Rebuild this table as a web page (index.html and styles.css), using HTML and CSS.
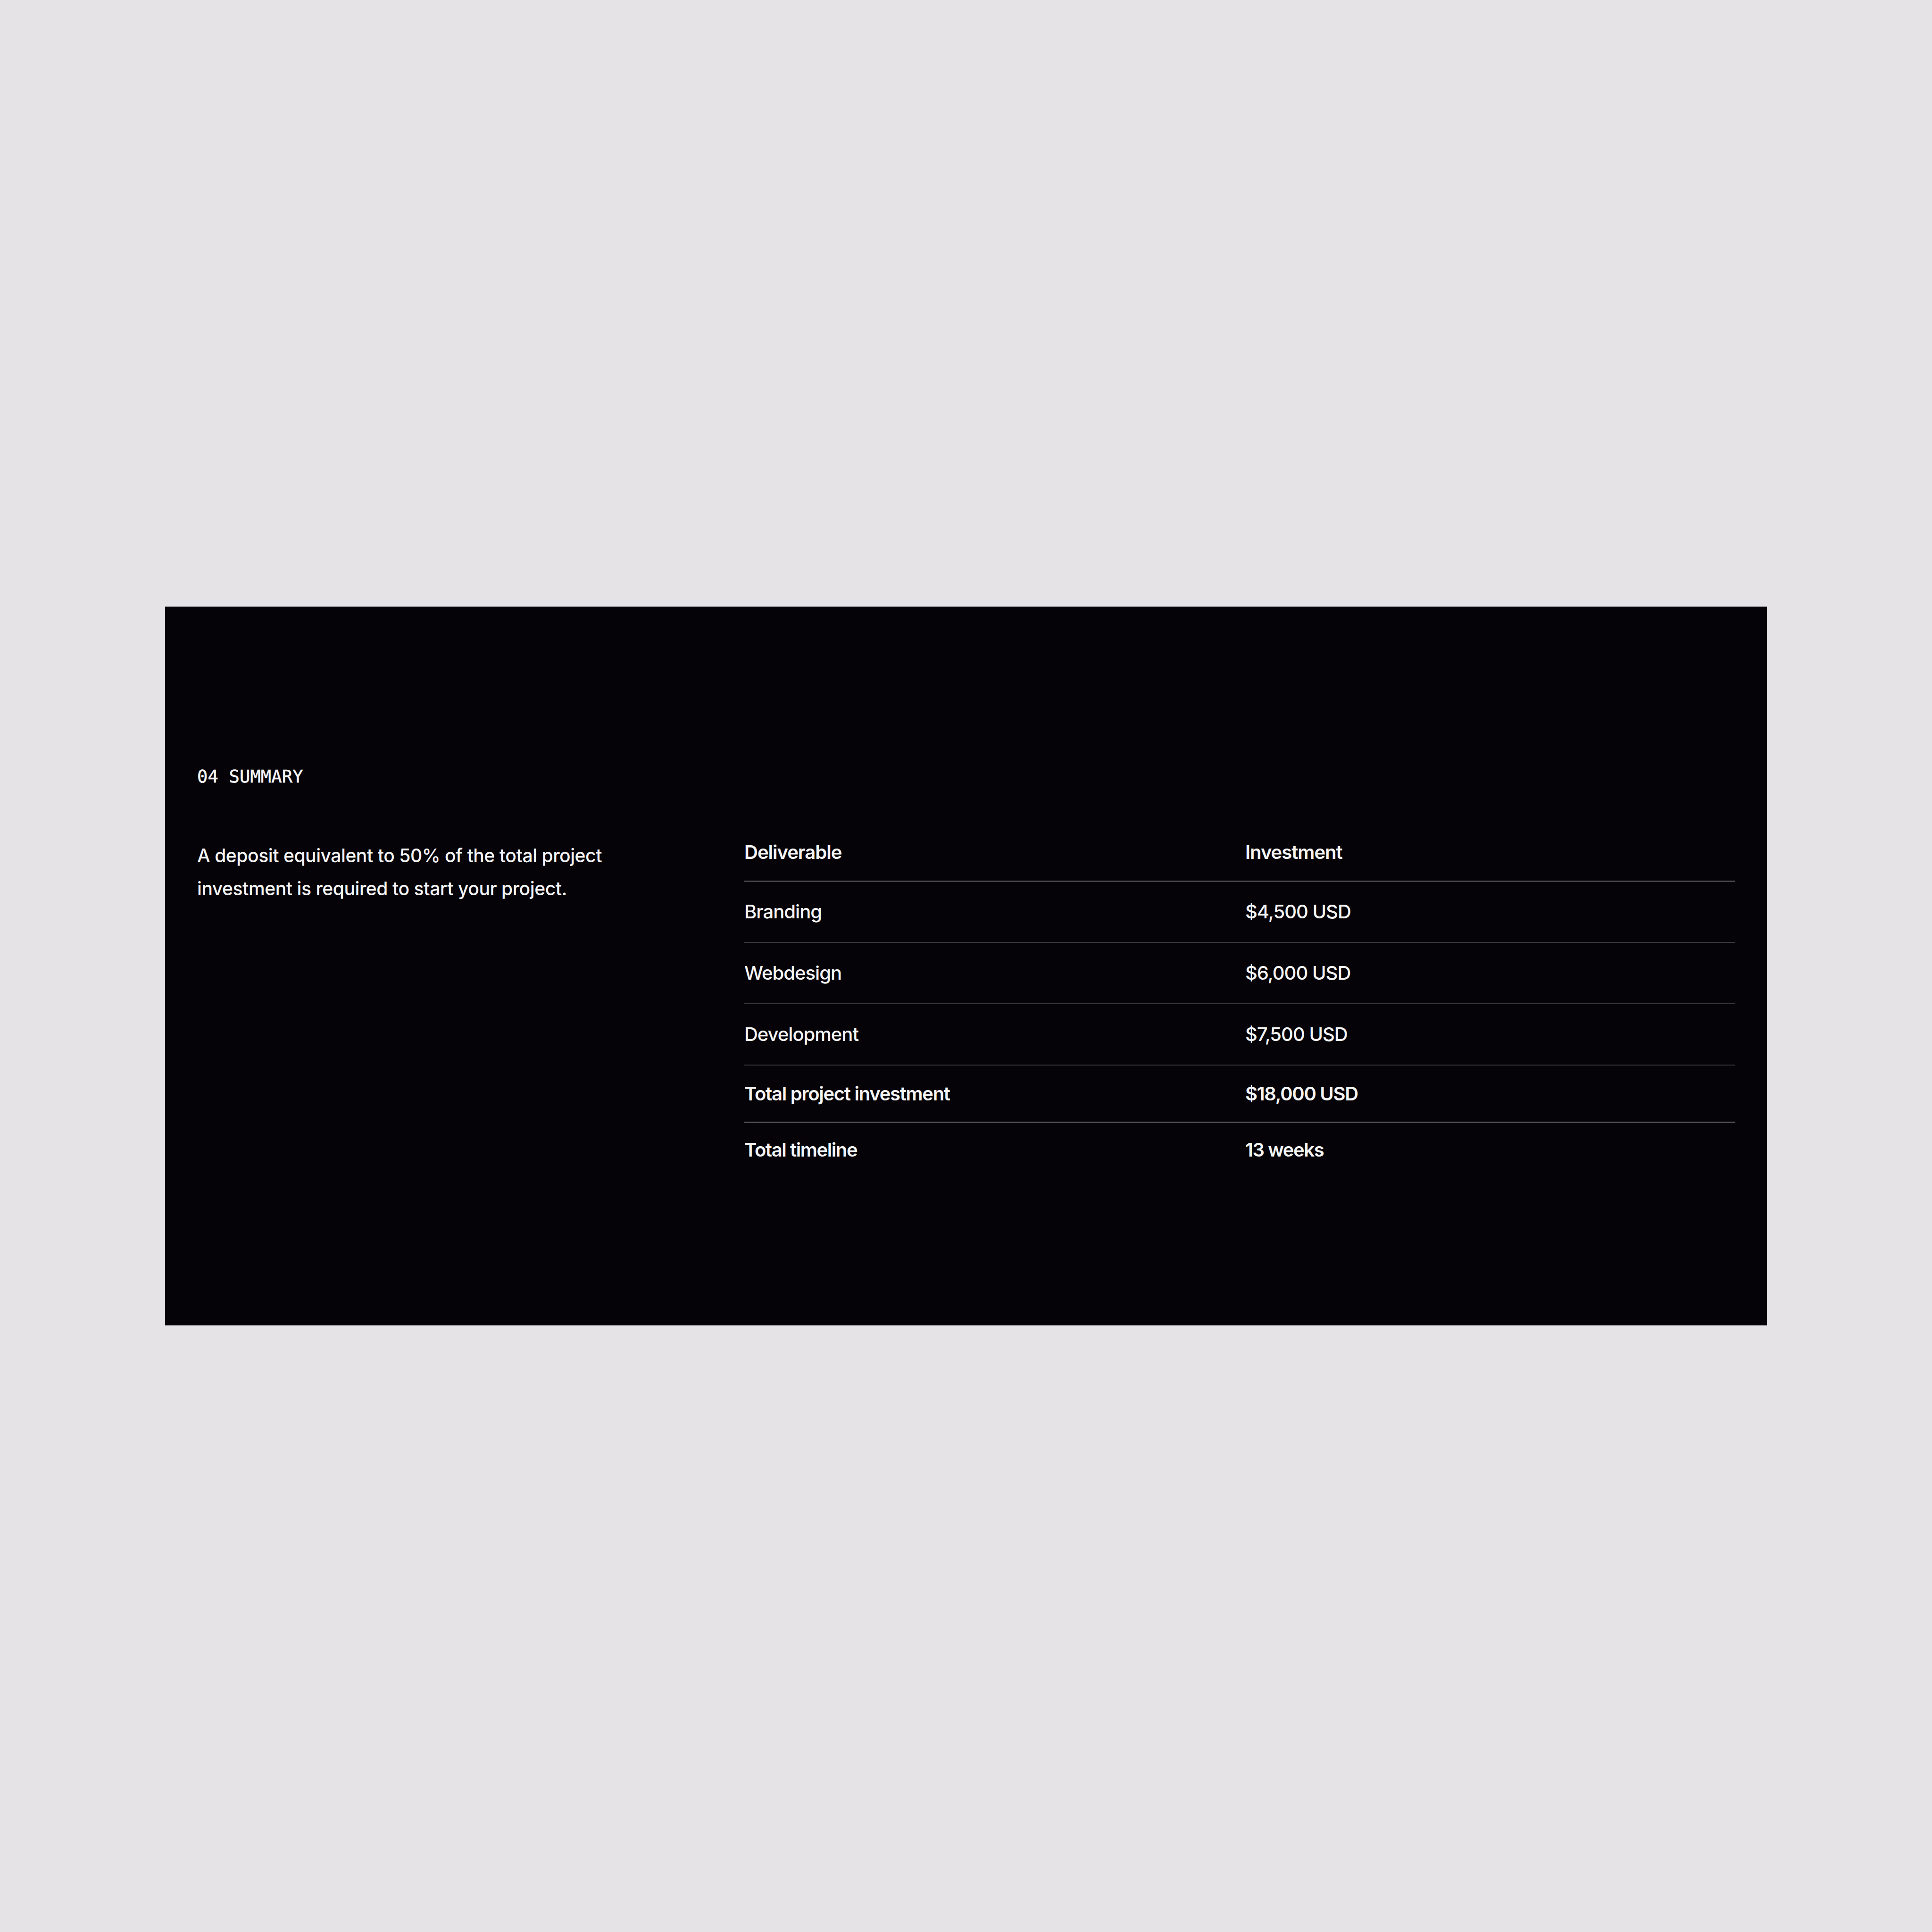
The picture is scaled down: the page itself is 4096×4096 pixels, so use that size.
FILE: index.html
```html
<!DOCTYPE html>
<html lang="en">
<head>
<meta charset="utf-8">
<title>04 Summary</title>
<link rel="stylesheet" href="styles.css">
</head>
<body>
<section class="panel">
  <div class="label">04 SUMMARY</div>
  <div class="content">
    <p class="intro">A deposit equivalent to 50% of the total project investment is required to start your project.</p>
    <div class="table">
      <div class="row head">
        <div class="cell">Deliverable</div>
        <div class="cell">Investment</div>
      </div>
      <div class="row">
        <div class="cell">Branding</div>
        <div class="cell">$4,500 USD</div>
      </div>
      <div class="row">
        <div class="cell">Webdesign</div>
        <div class="cell">$6,000 USD</div>
      </div>
      <div class="row">
        <div class="cell">Development</div>
        <div class="cell">$7,500 USD</div>
      </div>
      <div class="row total">
        <div class="cell">Total project investment</div>
        <div class="cell">$18,000 USD</div>
      </div>
      <div class="row timeline">
        <div class="cell">Total timeline</div>
        <div class="cell">13 weeks</div>
      </div>
    </div>
  </div>
</section>
</body>
</html>
```
FILE: styles.css
```css
html, body {
  margin: 0;
  padding: 0;
  background: #e5e3e6;
}

body {
  padding: 1286px 0 0 350px;
  font-family: Inter, "Liberation Sans", sans-serif;
  color: #f4f4f5;
}

.panel {
  box-sizing: border-box;
  width: 3396px;
  background: #050307;
  padding: 342px 68px 348px 68px;
}

.label {
  font-family: "DejaVu Sans Mono", "Liberation Mono", monospace;
  font-size: 37px;
  line-height: 38px;
  letter-spacing: 0.2px;
  color: #f4f4f5;
  -webkit-text-stroke: 0.6px #f4f4f5;
}

.content {
  display: grid;
  grid-template-columns: 1160px 2100px;
  align-items: start;
  margin-top: 113px;
}

.intro {
  margin: 0;
  max-width: 1000px;
  font-size: 39px;
  font-weight: 500;
  line-height: 70px;
  letter-spacing: -0.011em;
}

.table {
  margin-top: 4px;
}

.row {
  display: grid;
  grid-template-columns: 1062px 1fr;
  font-size: 40px;
  line-height: 48px;
  font-weight: 500;
  letter-spacing: -0.025em;
  padding: 40px 0 40px 0;
  border-bottom: 2px solid #38383b;
}

.row.head {
  padding: 0 0 36px 0;
  font-weight: 600;
  border-bottom-color: #6b6b6d;
}

.row.total {
  padding: 36px 0 35px 0;
  font-weight: 600;
  letter-spacing: -0.032em;
  border-bottom-color: #6b6b6d;
}

.row.timeline {
  padding: 34px 0 0 0;
  font-weight: 600;
  letter-spacing: -0.035em;
  border-bottom: none;
}
```
